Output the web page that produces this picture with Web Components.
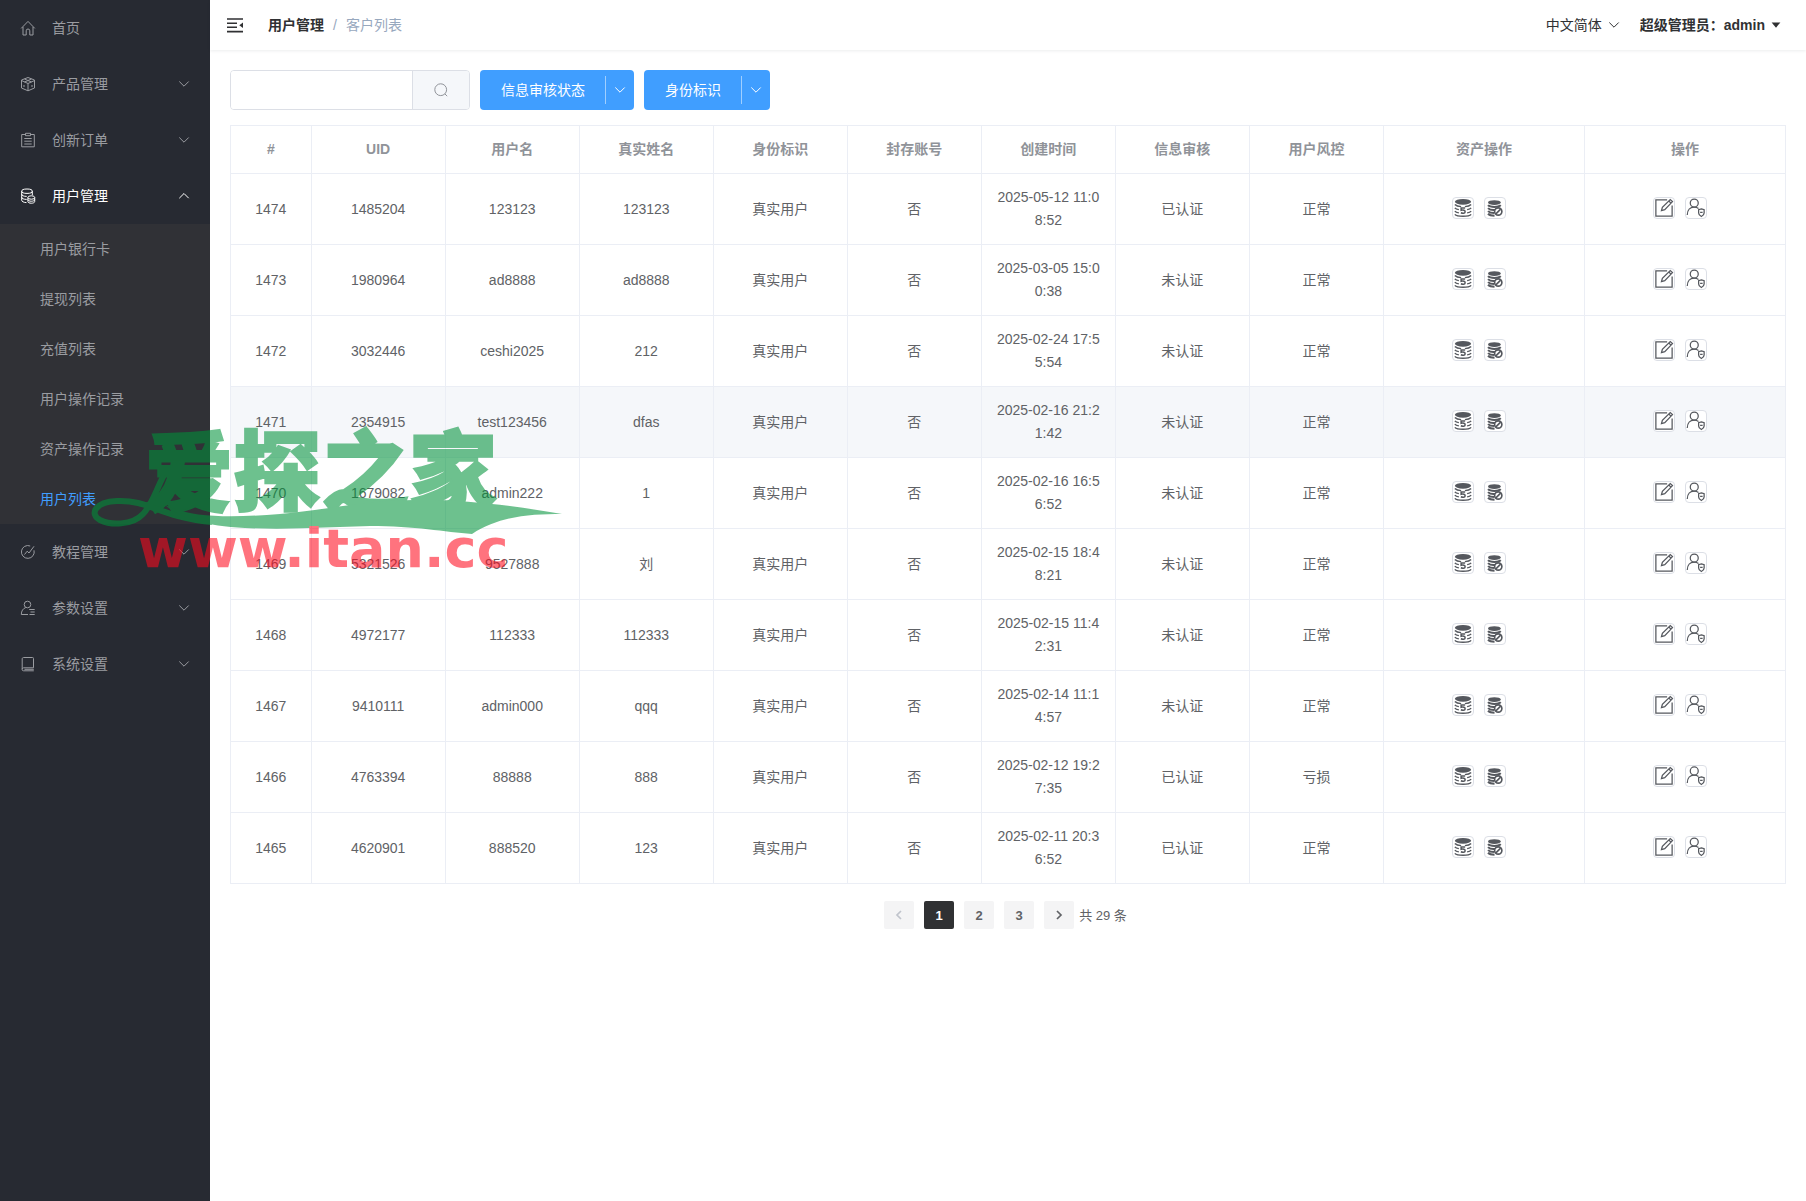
<!DOCTYPE html>
<html lang="zh-CN">
<head>
<meta charset="utf-8">
<title>客户列表</title>
<style>
  html, body { margin: 0; height: 100%; }
  body {
    font: 14px/23px "Liberation Sans", "Noto Sans CJK SC", sans-serif;
    color: #606266;
    background: #fff;
  }
</style>
</head>
<body>
<admin-app></admin-app>

<script>
// Stroked icons use a 16x16 grid, currentColor everywhere
const ICONS = {
  home: '<path d="M1.2 8.4 8 1.4l6.8 7M3 7v8h3.200v-4.200a1.800 1.800 0 0 1 3.600 0V15H13V7"/>',
  box: '<path d="M8 1.500 14.500 4v8L8 14.800 1.500 12V4ZM1.500 4.500 8 7.500l6.500-3M8 7.500v7M4.500 3l7 3M11.500 3l-7 3M4 9v2M12 9v2"/>',
  order: '<path d="M5 2.500H1.700v12.300h12.600V2.500H11M5.500 1.300h5v2.400h-5ZM4.300 6.500h7.400M4.300 9.200h7.400M4.300 12h7.400"/>',
  coins: '<ellipse cx="7" cy="3.200" rx="5.300" ry="2.200"/><path d="M1.700 3.200v9c0 1.300 2 2.300 4.800 2.400M12.300 3.200v4M1.700 6.200c0 1.300 2 2.200 5 2.200M1.700 9.200c0 1.300 2 2.200 5 2.200"/><ellipse cx="11.300" cy="9.500" rx="3.400" ry="1.700"/><path d="M7.900 9.500v4c0 2.300 6.800 2.300 6.800 0v-4M7.900 11.500c0 2.300 6.800 2.300 6.800 0"/>',
  course: '<path d="M10.200 2A6.400 6.400 0 1 0 14 6.300M4.500 10.500l2.700-3.300 1.800 1.800 5-6.700"/>',
  user: '<circle cx="7.500" cy="4.500" r="3.300"/><path d="M5.800 7.500C3 8.500 1.300 11 1.300 14.500H8M9.200 9.500h5.500M10.500 12h4.200M9.500 14.500h5.200"/>',
  book: '<path d="M13.500 11.800V2.500c0-.7-.3-1-1-1H3.700c-1 0-1.500.5-1.500 1.500v10.200M13.500 11.800H3.600a1.500 1.500 0 0 0 0 3h10.200M4.500 13.300h9.300"/>',
  down: '<path d="m3.300 5.500 4.700 4.700 4.700-4.700"/>',
  up: '<path d="m3.300 10.200 4.700-4.700 4.700 4.700"/>',
  left: '<path d="M10 4 6 8l4 4" stroke-width="1.700"/>',
  right: '<path d="m6 4 4 4-4 4" stroke-width="1.700"/>',
  search: '<circle cx="7.700" cy="7.700" r="5.900"/><path d="m11.900 11.900 2.300 2.300"/>',
  fold: '<path d="M0 2h16M0 6.300h10M0 10.300h10M0 14.600h16" stroke-width="1.600"/><path d="M16 5.500v5.600l-3.700-2.800Z" fill="currentColor" stroke="none"/>',
  caret: '<path d="M3 5h10l-5 6Z" fill="currentColor" stroke="none"/>',
  edit: '<path d="M10.500 1.500h-9v13h13V6"/><path d="m6 10 .7-2.500L13 1.200l1.800 1.700-6.200 6.400ZM11.800 2.400l1.800 1.700"/>',
  guard: '<circle cx="6.600" cy="4" r="3.200"/><path d="M1 13.500c0-4 2.300-6.300 5.600-6.300 1.700 0 2.600.5 3.400 1.200M12.300 8.700l2.200.7v2.600c0 1.400-1 2.200-2.200 2.800-1.200-.6-2.200-1.400-2.200-2.800V9.400ZM11.300 11.500h2"/>',
  money: '<ellipse cx="8" cy="3" rx="6.500" ry="2.300" fill="currentColor" stroke="none"/><path d="M1.500 5.200c1.200 1.200 3 1.600 5 1.700M14.500 5.200c-1.200 1.200-3 1.600-5 1.700M1.500 7.900c.6.800 1.700 1.200 3.200 1.400M14.500 7.900c-.6.800-1.700 1.200-3.200 1.400M1.500 10.500c.6.800 1.700 1.200 3.200 1.400M14.500 10.500c-.6.800-1.700 1.200-3.200 1.400M1.500 13.100c1.800 2.100 11.200 2.100 13 0" stroke-width="1.200"/><path d="M9.700 8H6.500v1.800c1.700-.5 3.200 0 3.200 1.200 0 1.300-1.700 1.600-3.400.8" stroke-width="1.200"/>',
  frozen: '<ellipse cx="7.500" cy="3.600" rx="5.100" ry="1.900" fill="currentColor" stroke="none"/><path d="M2.400 5.700c1.800 1.900 8.400 1.900 10.200 0M2.400 8.100c1.400 1.500 5 1.800 8 1.100M2.400 10.500c1 1 3 1.500 5 1.500M2.400 12.600c1 1 3 1.500 5.200 1.500" stroke-width="1.600"/><circle cx="10.600" cy="10.800" r="2.900" fill="#fff" stroke-width="1.300"/><path d="m8.700 12.700 3.800-3.800" stroke-width="1.300"/>'
};

class UiIcon extends HTMLElement {
  constructor() {
    super();
    this.attachShadow({mode: "open"});
  }
  connectedCallback() {
    this.shadowRoot.innerHTML = `
      <style>
        :host { display: inline-flex; flex: none; width: 16px; height: 16px; }
        svg { width: 100%; height: 100%; fill: none; stroke: currentColor; stroke-width: 1; }
      </style>
      <svg viewBox="0 0 16 16" aria-hidden="true">${ICONS[this.getAttribute("name")]}</svg>
    `;
  }
}
customElements.define("ui-icon", UiIcon);

// One top level entry of the side menu. Children go in the slot.
class MenuGroup extends HTMLElement {
  constructor() {
    super();
    this.attachShadow({mode: "open"});
  }
  connectedCallback() {
    const open = this.hasAttribute("open");
    const arrow = this.hasAttribute("leaf") ? "" : `<ui-icon name="${open ? "up" : "down"}"></ui-icon>`;
    this.shadowRoot.innerHTML = `
      <style>
        :host { display: block; color: #9a9ca1; }
        :host([open]) { color: #fff; }
        button {
          display: flex; align-items: center; gap: 16px;
          width: 100%; height: 56px; padding: 0 18px 0 20px;
          border: 0; background: none; color: inherit; font: inherit;
          text-align: left; cursor: pointer;
        }
        span { flex: 1; }
        div { background: #303136; }
      </style>
      <button type="button" aria-expanded="${open}">
        <ui-icon name="${this.getAttribute("icon")}"></ui-icon>
        <span>${this.getAttribute("label")}</span>${arrow}
      </button>
      <div><slot></slot></div>
    `;
  }
}
customElements.define("menu-group", MenuGroup);

class MenuLink extends HTMLElement {
  constructor() {
    super();
    this.attachShadow({mode: "open"}).innerHTML = `
      <style>
        :host { display: block; color: #9a9ca1; }
        :host([active]) { color: #409eff; }
        a { display: block; line-height: 50px; padding-left: 40px; color: inherit; text-decoration: none; }
      </style>
      <a href="#"><slot></slot></a>
    `;
  }
}
customElements.define("menu-link", MenuLink);

class SideMenu extends HTMLElement {
  constructor() {
    super();
    this.attachShadow({mode: "open"}).innerHTML = `
      <style>
        :host { display: block; background: #272a32; }
      </style>
      <nav>
        <menu-group leaf icon="home" label="首页"></menu-group>
        <menu-group icon="box" label="产品管理"></menu-group>
        <menu-group icon="order" label="创新订单"></menu-group>
        <menu-group open icon="coins" label="用户管理">
          <menu-link>用户银行卡</menu-link>
          <menu-link>提现列表</menu-link>
          <menu-link>充值列表</menu-link>
          <menu-link>用户操作记录</menu-link>
          <menu-link>资产操作记录</menu-link>
          <menu-link active>用户列表</menu-link>
        </menu-group>
        <menu-group icon="course" label="教程管理"></menu-group>
        <menu-group icon="user" label="参数设置"></menu-group>
        <menu-group icon="book" label="系统设置"></menu-group>
      </nav>
    `;
  }
}
customElements.define("side-menu", SideMenu);

class TopBar extends HTMLElement {
  constructor() {
    super();
    this.attachShadow({mode: "open"}).innerHTML = `
      <style>
        :host {
          display: flex; align-items: center; height: 50px; padding: 0 23px 0 17px;
          color: #303133; box-shadow: 0 1px 3px rgba(0, 21, 41, .08);
        }
        button {
          display: flex; align-items: center; gap: 4px;
          padding: 0; border: 0; background: none; color: inherit; font: inherit; cursor: pointer;
        }
        nav { display: flex; gap: 9px; flex: 1; margin-left: 25px; color: #97a8be; }
        nav a { color: #303133; font-weight: 700; text-decoration: none; }
        .lang { margin-right: 18px; }
        .account { font-weight: 700; }
        .account ui-icon { width: 14px; height: 14px; }
      </style>
      <button type="button" aria-label="收起菜单"><ui-icon name="fold"></ui-icon></button>
      <nav>
        <a href="#">用户管理</a><span>/</span><span>客户列表</span>
      </nav>
      <button class="lang" type="button">中文简体<ui-icon name="down"></ui-icon></button>
      <button class="account" type="button">超级管理员：admin<ui-icon name="caret"></ui-icon></button>
    `;
  }
}
customElements.define("top-bar", TopBar);

class SearchBox extends HTMLElement {
  constructor() {
    super();
    this.attachShadow({mode: "open"}).innerHTML = `
      <style>
        :host {
          display: flex; box-sizing: border-box; width: 240px; height: 40px;
          border: 1px solid #dcdfe6; border-radius: 4px; overflow: hidden;
        }
        input { flex: 1; min-width: 0; padding: 0 15px; border: 0; outline: 0; font: inherit; color: inherit; }
        button {
          display: flex; align-items: center; justify-content: center; width: 57px;
          border: 0; border-left: 1px solid #dcdfe6; background: #f5f7fa; color: #909399;
        }
      </style>
      <input type="text" aria-label="搜索">
      <button type="button" aria-label="搜索"><ui-icon name="search"></ui-icon></button>
    `;
  }
}
customElements.define("search-box", SearchBox);

class SplitButton extends HTMLElement {
  constructor() {
    super();
    this.attachShadow({mode: "open"}).innerHTML = `
      <style>
        :host { display: flex; align-items: center; height: 40px; border-radius: 4px; background: #409eff; color: #fff; }
        button {
          display: flex; align-items: center; justify-content: center;
          border: 0; background: none; color: inherit; font: inherit; cursor: pointer;
        }
        .main { padding: 0 20px 0 21px; }
        .toggle { width: 29px; height: 28px; padding: 0; border-left: 1px solid rgba(255, 255, 255, .5); }
      </style>
      <button class="main" type="button"><slot></slot></button>
      <button class="toggle" type="button" aria-label="展开"><ui-icon name="down"></ui-icon></button>
    `;
  }
}
customElements.define("split-button", SplitButton);

const HEADS = ["#", "UID", "用户名", "真实姓名", "身份标识", "封存账号", "创建时间", "信息审核", "用户风控", "资产操作", "操作"];
const USERS = [
  ["1474", "1485204", "123123", "123123", "2025-05-12 11:08:52", "已认证", "正常"],
  ["1473", "1980964", "ad8888", "ad8888", "2025-03-05 15:00:38", "未认证", "正常"],
  ["1472", "3032446", "ceshi2025", "212", "2025-02-24 17:55:54", "未认证", "正常"],
  ["1471", "2354915", "test123456", "dfas", "2025-02-16 21:21:42", "未认证", "正常"],
  ["1470", "1679082", "admin222", "1", "2025-02-16 16:56:52", "未认证", "正常"],
  ["1469", "5321526", "9527888", "刘", "2025-02-15 18:48:21", "未认证", "正常"],
  ["1468", "4972177", "112333", "112333", "2025-02-15 11:42:31", "未认证", "正常"],
  ["1467", "9410111", "admin000", "qqq", "2025-02-14 11:14:57", "未认证", "正常"],
  ["1466", "4763394", "88888", "888", "2025-02-12 19:27:35", "已认证", "亏损"],
  ["1465", "4620901", "888520", "123", "2025-02-11 20:36:52", "已认证", "正常"]
];

class UserTable extends HTMLElement {
  constructor() {
    super();
    this.attachShadow({mode: "open"});
  }
  action(icon, label) {
    return `<button type="button" aria-label="${label}"><ui-icon name="${icon}"></ui-icon></button>`;
  }
  row([id, uid, name, real, time, audit, risk]) {
    const cells = [id, uid, name, real, "真实用户", "否", time, audit, risk];
    return `
      <tr class="${id === "1471" ? "hover" : ""}">
        ${cells.map(c => `<td>${c}</td>`).join("")}
        <td><div class="actions">${this.action("money", "调整资产")}${this.action("frozen", "冻结资产")}</div></td>
        <td><div class="actions">${this.action("edit", "编辑")}${this.action("guard", "风控")}</div></td>
      </tr>`;
  }
  connectedCallback() {
    this.shadowRoot.innerHTML = `
      <style>
        :host { display: block; }
        table {
          width: 100%; table-layout: fixed; border-spacing: 0;
          border: solid #ebeef5; border-width: 1px 0 0 1px;
        }
        .id { width: 80px; }
        .text { width: 8.62%; }
        .ops { width: 12.93%; }
        th, td {
          padding: 12px 10px; text-align: center; word-break: break-all;
          border: solid #ebeef5; border-width: 0 1px 1px 0;
        }
        th { color: #909399; }
        .hover td { background: #f5f7fa; }
        .actions { display: flex; justify-content: center; gap: 10px; padding: 0 10px 2px 0; }
        button {
          display: flex; align-items: center; justify-content: center; width: 22px; height: 22px;
          padding: 0; border: 1px solid #dcdfe6; border-radius: 4px; background: #fff; color: #55585e;
        }
        ui-icon { width: 20px; height: 20px; }
      </style>
      <table>
        <colgroup>
          <col class="id"><col class="text" span="8"><col class="ops" span="2">
        </colgroup>
        <thead><tr>${HEADS.map(h => `<th scope="col">${h}</th>`).join("")}</tr></thead>
        <tbody>${USERS.map(u => this.row(u)).join("")}</tbody>
      </table>
    `;
  }
}
customElements.define("user-table", UserTable);

class PageNav extends HTMLElement {
  constructor() {
    super();
    this.attachShadow({mode: "open"}).innerHTML = `
      <style>
        :host { display: flex; justify-content: center; align-items: center; font-size: 13px; }
        button {
          display: flex; align-items: center; justify-content: center;
          width: 30px; height: 28px; margin: 0 5px; padding: 0; border: 0; border-radius: 2px;
          background: #f4f4f5; color: #606266; font: inherit; font-weight: 700;
        }
        button:disabled { color: #c0c4cc; }
        .current { background: #303133; color: #fff; }
        span { margin-right: 10px; }
      </style>
      <button type="button" disabled aria-label="上一页"><ui-icon name="left"></ui-icon></button>
      <button class="current" type="button" aria-current="page">1</button>
      <button type="button">2</button>
      <button type="button">3</button>
      <button type="button" aria-label="下一页"><ui-icon name="right"></ui-icon></button>
      <span>共 29 条</span>
    `;
  }
}
customElements.define("page-nav", PageNav);

// Watermark that floats over the menu and the table
class SiteMark extends HTMLElement {
  constructor() {
    super();
    this.attachShadow({mode: "open"}).innerHTML = `
      <style>
        :host { position: absolute; left: 80px; top: 400px; opacity: .57; pointer-events: none; }
        svg { display: block; }
        .name {
          font: 900 88px "Noto Sans CJK SC", sans-serif;
          fill: #00933a; stroke: #00933a; stroke-width: 2;
        }
        .site { font: 700 54px "DejaVu Sans", sans-serif; fill: #ff0a1e; }
      </style>
      <svg width="500" height="185" viewBox="0 -20 500 185">
        <text class="name" x="65" y="84">爱探之家</text>
        <path fill="none" stroke="#00933a" stroke-width="6" d="M84 55C76 70 72 85 63 94 52 106 30 105 20 100 9 94 15 82 37 81 62 80 74 90 98 96 110 99 120 101 132 102"/>
        <path fill="#00933a" d="M84 84C108 98 150 98 200 94 245 90 280 81 333 80 390 79 440 87 482 94 450 94 420 96 392 114 365 112 335 106 290 106 250 107 210 110 165 108 120 106 96 96 84 84Z"/>
        <text class="site" x="58" y="147">www.itan.cc</text>
      </svg>
    `;
  }
}
customElements.define("site-mark", SiteMark);

class AdminApp extends HTMLElement {
  constructor() {
    super();
    this.attachShadow({mode: "open"}).innerHTML = `
      <style>
        :host { display: flex; position: relative; min-height: 100%; }
        side-menu { flex: 0 0 210px; }
        .page { flex: 1; min-width: 0; }
        main { padding: 20px; }
        .filters { display: flex; gap: 10px; margin-bottom: 15px; }
        page-nav { margin-top: 17px; }
      </style>
      <side-menu></side-menu>
      <div class="page">
        <top-bar></top-bar>
        <main>
          <div class="filters">
            <search-box></search-box>
            <split-button>信息审核状态</split-button>
            <split-button>身份标识</split-button>
          </div>
          <user-table></user-table>
          <page-nav></page-nav>
        </main>
      </div>
      <site-mark></site-mark>
    `;
  }
}
customElements.define("admin-app", AdminApp);
</script>
</body>
</html>
